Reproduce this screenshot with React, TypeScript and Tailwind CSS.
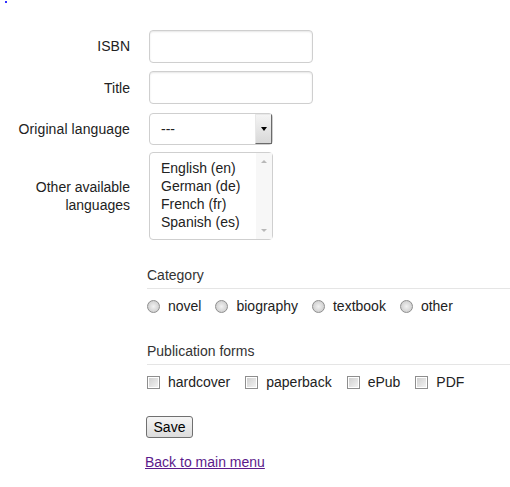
import React from 'react';

const languages = ['English (en)', 'German (de)', 'French (fr)', 'Spanish (es)'];
const categories = ['novel', 'biography', 'textbook', 'other'];
const forms = ['hardcover', 'paperback', 'ePub', 'PDF'];

const Radio: React.FC = () => (
  <span className="inline-block w-[13px] h-[13px] rounded-full border border-[#8e8e8e] bg-radial from-[#f2f2f2] to-[#c4c4c4] shrink-0" />
);

const Checkbox: React.FC = () => (
  <span className="inline-block w-[13px] h-[13px] border border-[#8e8e8e] bg-white p-[1px] shrink-0">
    <span className="block w-full h-full bg-linear-to-br from-[#d0d0d0] to-[#f2f2f2]" />
  </span>
);

const App: React.FC = () => {
  return (
    <div className="w-[510px] h-[487px] bg-white text-[14px] text-[#222] font-['Liberation_Sans',Arial,sans-serif] overflow-hidden">
      <div className="ml-[5px] mt-[1px] w-[2px] h-[2px] bg-[#3030ff]" />

      <div className="mt-[27px]">
        <div className="flex items-center mb-[8px]">
          <label className="w-[130px] text-right">ISBN</label>
          <div className="ml-[19px] w-[164px] h-[33px] rounded-[4px] border border-[#cfcfcf] shadow-[inset_0_1px_2px_rgba(0,0,0,0.1)]" />
        </div>

        <div className="flex items-center mb-[9px]">
          <label className="w-[130px] text-right pt-[1px]">Title</label>
          <div className="ml-[19px] w-[164px] h-[33px] rounded-[4px] border border-[#cfcfcf] shadow-[inset_0_1px_2px_rgba(0,0,0,0.1)]" />
        </div>

        <div className="flex items-center mb-[7px]">
          <label className="w-[130px] text-right tracking-[0.1px]">Original language</label>
          <div className="ml-[19px] w-[124px] h-[32px] rounded-[4px] border border-[#cfcfcf] flex items-stretch">
            <span className="flex-1 pl-[11px] flex items-center">---</span>
            <span className="w-[17px] flex items-center justify-center bg-linear-to-b from-[#f4f4f4] to-[#d8d8d8] border-l border-t border-[#e8e8e8] border-r border-b border-r-[#6a6a6a] border-b-[#6a6a6a]">
              <span className="w-0 h-0 border-l-[3.5px] border-r-[3.5px] border-t-[4px] border-l-transparent border-r-transparent border-t-black" />
            </span>
          </div>
        </div>

        <div className="flex items-center">
          <label className="w-[130px] text-right leading-[18px]">
            Other available
            <br />
            languages
          </label>
          <div className="ml-[19px] w-[124px] h-[88px] rounded-[4px] border border-[#cfcfcf] flex">
            <div className="flex-1 pl-[11px] pt-[6px] leading-[18px]">
              {languages.map((l) => (
                <div key={l}>{l}</div>
              ))}
            </div>
            <div className="w-[16px] flex flex-col justify-between items-center py-[7px] bg-[#f7f7f7]">
              <span className="w-0 h-0 border-l-[3px] border-r-[3px] border-b-[3px] border-l-transparent border-r-transparent border-b-[#b8b8b8]" />
              <span className="w-0 h-0 border-l-[3px] border-r-[3px] border-t-[3px] border-l-transparent border-r-transparent border-t-[#b8b8b8]" />
            </div>
          </div>
        </div>
      </div>

      <div className="ml-[147px] mt-[25px]">
        <div className="leading-[20px] pb-[3px] border-b border-[#e5e5e5] text-[#333]">Category</div>
        <div className="flex items-center mt-[7px] leading-[20px]">
          {categories.map((c) => (
            <div key={c} className="flex items-center mr-[14px]">
              <Radio />
              <span className="ml-[8px]">{c}</span>
            </div>
          ))}
        </div>
      </div>

      <div className="ml-[147px] mt-[25px]">
        <div className="leading-[20px] pb-[3px] border-b border-[#e5e5e5] text-[#333]">Publication forms</div>
        <div className="flex items-center mt-[7px] leading-[20px]">
          {forms.map((f) => (
            <div key={f} className="flex items-center mr-[15px]">
              <Checkbox />
              <span className="ml-[8px]">{f}</span>
            </div>
          ))}
        </div>
      </div>

      <div className="ml-[146px] mt-[24px]">
        <button className="w-[47px] h-[22px] rounded-[3px] border border-[#707070] bg-linear-to-b from-[#f5f5f5] to-[#dcdcdc] text-[14px] text-black leading-none">
          Save
        </button>
      </div>

      <div className="ml-[145px] mt-[14px] leading-[20px]">
        <a href="#" className="text-[#5b1a8b] underline">Back to main menu</a>
      </div>
    </div>
  );
};

export default App;
